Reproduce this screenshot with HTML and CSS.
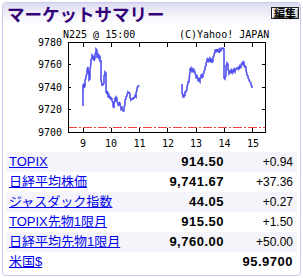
FILE: index.html
```html
<!DOCTYPE html>
<html lang="ja">
<head>
<meta charset="utf-8">
<title>マーケットサマリー</title>
<link rel="stylesheet" href="styles.css">
</head>
<body>
<div class="box">
  <div class="head">
    <h1 class="title">マーケットサマリー</h1>
    <span class="edit">編集</span>
  </div>
  <svg class="chart" viewBox="3 25 297 125" width="297" height="125" xmlns="http://www.w3.org/2000/svg">
    <g class="lbl">
      <text x="63" y="38">N225 @ 15:00</text>
      <text x="179" y="38">(C)Yahoo! JAPAN</text>
      <text x="62" y="45.5" text-anchor="end">9780</text>
      <text x="62" y="68" text-anchor="end">9760</text>
      <text x="62" y="90.5" text-anchor="end">9740</text>
      <text x="62" y="113" text-anchor="end">9720</text>
      <text x="62" y="135.5" text-anchor="end">9700</text>
      <text x="83" y="146.5" text-anchor="middle">9</text>
      <text x="111" y="146.5" text-anchor="middle">10</text>
      <text x="139.5" y="146.5" text-anchor="middle">11</text>
      <text x="168" y="146.5" text-anchor="middle">12</text>
      <text x="196" y="146.5" text-anchor="middle">13</text>
      <text x="224.5" y="146.5" text-anchor="middle">14</text>
      <text x="253" y="146.5" text-anchor="middle">15</text>
    </g>
    <line x1="68" y1="127.5" x2="266" y2="127.5" stroke="#f04040" stroke-width="1" stroke-dasharray="9 2 2 2"/>
    <g stroke="#000" stroke-width="1" fill="none" shape-rendering="crispEdges">
      <rect x="68.5" y="42.5" width="197" height="90"/>
      <path d="M83 132v-4M111 132v-4M139 132v-4M167 132v-4M196 132v-4M224 132v-4M252 132v-4
               M83 43v4M111 43v4M139 43v4M167 43v4M196 43v4M224 43v4M252 43v4
               M266 64.5h-4M266 87.5h-4M266 109.5h-4
               M68 64.5h3M68 87.5h3M68 109.5h3"/>
    </g>
    <g stroke="#5252f0" stroke-width="1.6" fill="none" stroke-linejoin="miter">
      <polyline points="83,106 83,85 84,84 84,88 85,86 85,80 86,78 86,76 87,74 87,70 88,67 88,69 89,75 89,80 90,79 90,70 91,63 91,60 92,58 92,55 93,56 93,58 94,57 94,61 95,58 95,54 96,52 96,49 97,50 97,58 98,56 98,54 99,55 99,58 100,57 100,62 101,60 101,80 102,84 102,86 103,84 103,85 104,83 104,76 105,74 105,72 106,73 106,92 107,94 107,91 108,93 108,96 109,95 109,98 110,96 110,99 111,97 111,100 112,98 112,101 113,102 113,106 114,108 114,104 115,100 115,98 116,97 116,100 117,99 117,102 118,103 118,104 119,103 119,105 120,104 120,105 121,107 121,109 122,108 122,110 123,111 124,111 124,108 125,104 125,100 126,99 126,97 127,96 127,94 128,93 128,92 129,93 129,92 130,94 130,98 131,99 131,100 132,99 132,100 133,98 133,99 134,97 134,98 135,97 135,96 136,97 136,93 137,90 137,88 138,86 138,87 139,85"/>
      <polyline points="182,84 182,93 183,95 183,97 184,97 184,94 185,96 185,92 186,92 186,91 187,90 187,86 188,84 188,82 189,82 189,80 190,72 190,69 191,68 191,70 192,69 192,71 193,70 193,71 194,70 194,72 195,72 195,74 196,75 196,77 197,76 197,78 198,78 198,80 199,79 199,81 200,82 200,79 201,78 201,76 202,77 202,75 203,76 203,74 204,73 204,71 205,70 205,67 206,66 206,63 207,62 207,60 208,61 208,59 209,60 209,62 210,60 210,58 211,59 211,61 212,60 212,63 213,61 213,57 214,56 214,54 215,53 215,50 216,50 216,52 217,49 217,51 218,50 218,52 219,50 219,53 220,51 220,49 221,50 221,49 222,48 223,48 223,49 224,49 224,78 225,79 225,77 226,76 226,66 227,64 227,63 228,64 228,70 229,71 229,74 230,73 230,71 231,70 231,72 232,73 232,71 233,72 233,70 234,69 234,71 235,72 235,70 236,69 236,70 237,68 237,69 238,67 238,68 239,67 239,69 240,68 240,66 241,67 241,65 242,63 243,62 243,64 244,63 244,66 245,67 245,66 246,67 246,70 247,75 248,76 248,78 249,79 249,80 250,82 251,83 251,85 252,86 252,88"/>
    </g>
  </svg>
  <div class="quotes">
    <div class="row alt"><a class="name" href="#">TOPIX</a><span class="val">914.50</span><span class="chg">+0.94</span></div>
    <div class="row"><a class="name" href="#">日経平均株価</a><span class="val">9,741.67</span><span class="chg">+37.36</span></div>
    <div class="row alt"><a class="name" href="#">ジャスダック指数</a><span class="val">44.05</span><span class="chg">+0.27</span></div>
    <div class="row"><a class="name" href="#">TOPIX先物1限月</a><span class="val">915.50</span><span class="chg">+1.50</span></div>
    <div class="row alt"><a class="name" href="#">日経平均先物1限月</a><span class="val">9,760.00</span><span class="chg">+50.00</span></div>
    <div class="row"><a class="name" href="#">米国$</a><span class="val wide">95.9700</span></div>
  </div>
</div>
</body>
</html>
```

FILE: styles.css
```css
html, body {
  margin: 0;
  padding: 0;
  background: #fff;
}

.box {
  margin: 2px;
  width: 297px;
  height: 272px;
  border: 1px solid #c9c9ef;
  border-radius: 4px;
  overflow: hidden;
  background: #fff;
}

.head {
  height: 22px;
  display: flex;
  justify-content: space-between;
  align-items: center;
  padding: 0 1px 0 4px;
  background: linear-gradient(to bottom, #dcdcf2 0%, #f4f4fa 60%, #ffffff 100%);
}

.title {
  margin: 0;
  font: 700 17.5px/22px "Noto Sans CJK JP", sans-serif;
  color: #330077;
}

.edit {
  align-self: flex-start;
  margin-top: 4px;
  padding: 0 2px;
  font: 700 11px/10px "Noto Sans CJK JP", sans-serif;
  color: #000;
  background: #e2e2e2;
  border: 1px solid #222;
  box-shadow: inset 1px 1px #fff, inset -1px -1px #999;
}

.chart {
  display: block;
}

.lbl {
  font-family: "DejaVu Sans Mono", monospace;
  font-size: 10px;
  fill: #000;
}

.quotes {
  margin: 2px 3px 0 3px;
}

.row {
  display: grid;
  grid-template-columns: 1fr 80px 69px;
  align-items: center;
  height: 20px;
  padding: 0 4px 0 3px;
}

.alt {
  background: #f4f4fa;
}

.name {
  font: 13px/16px "Liberation Sans", "Noto Sans CJK JP", sans-serif;
  color: #0000ee;
  text-decoration: underline;
  justify-self: start;
  white-space: nowrap;
}

.val {
  font: 700 13px/16px "Liberation Sans", sans-serif;
  letter-spacing: 0.5px;
  color: #000;
  text-align: right;
}

.val.wide {
  grid-column: 2 / 4;
}

.chg {
  font: 12px/16px "Liberation Sans", sans-serif;
  color: #000;
  text-align: right;
}
```
